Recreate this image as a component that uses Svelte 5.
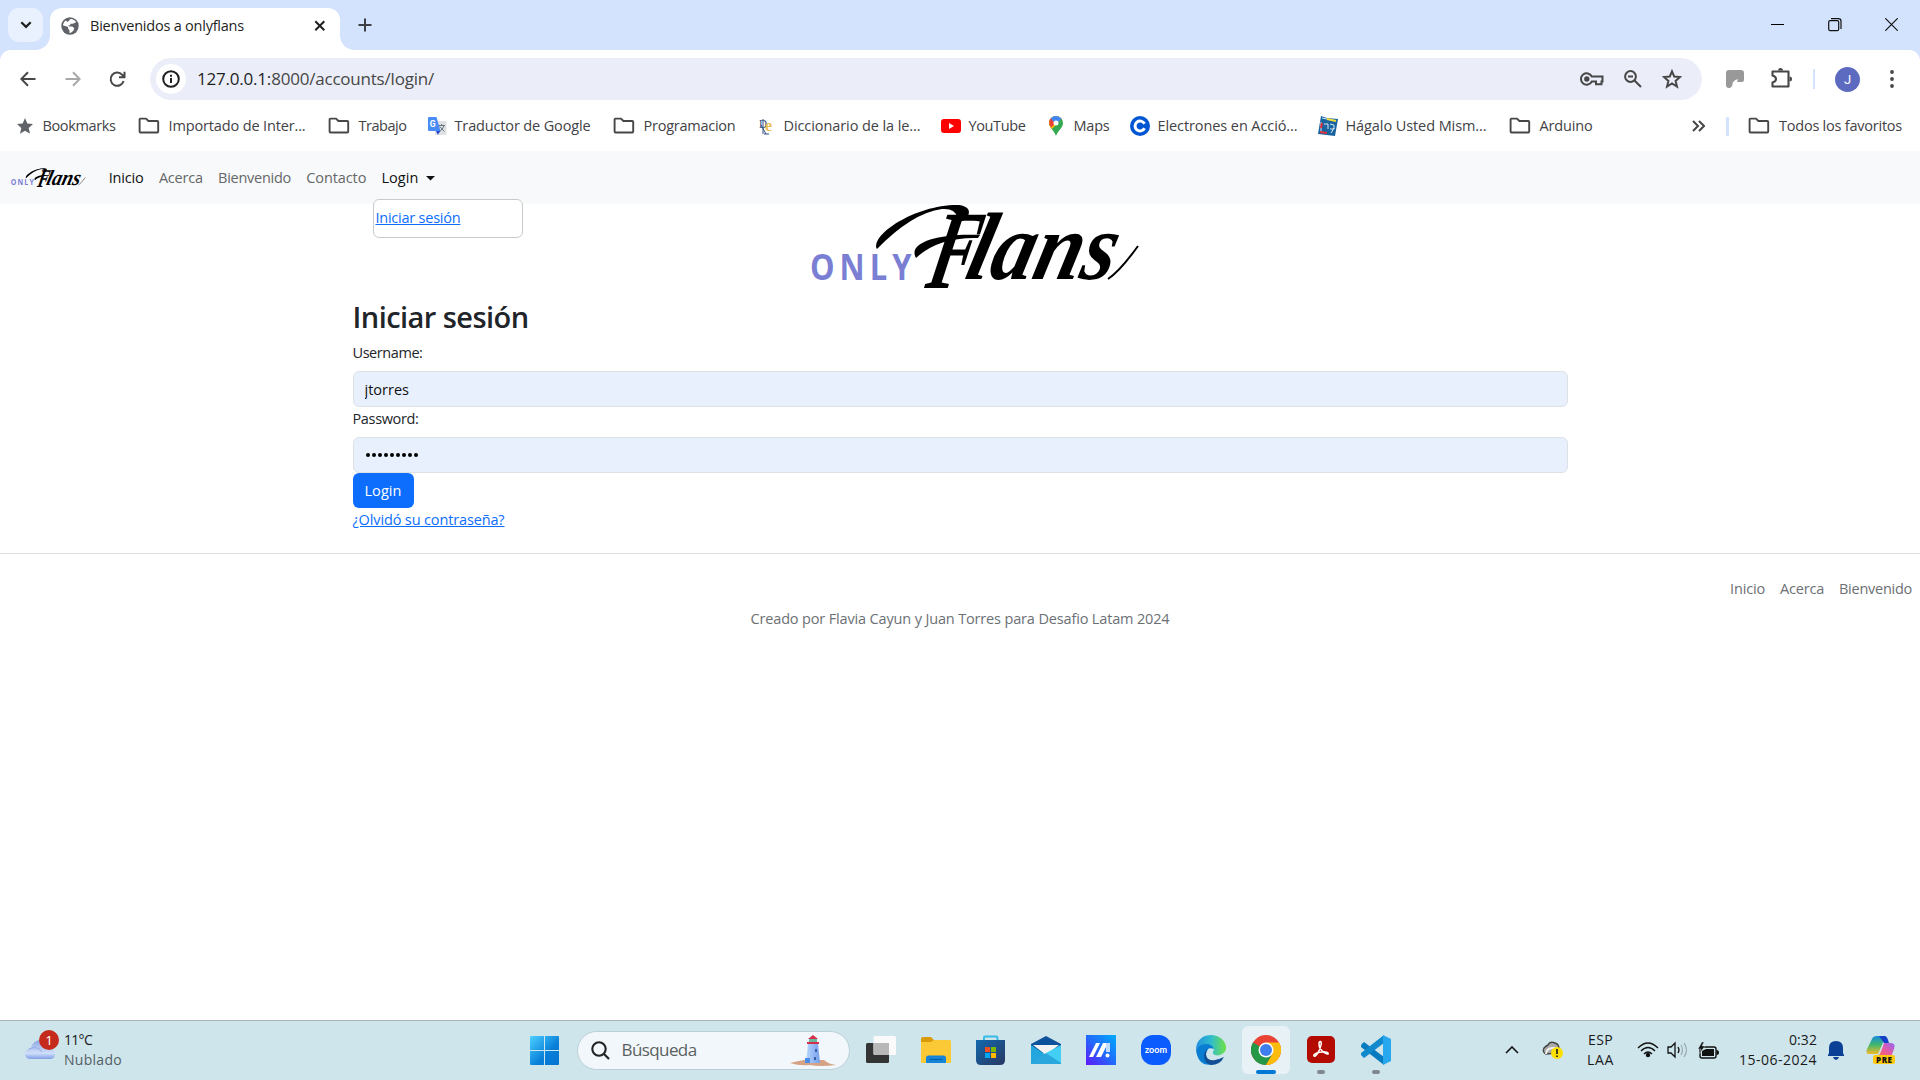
<script>
  const bookmarks = [
    { icon: 'star', label: 'Bookmarks', w: 73 },
    { icon: 'folder', label: 'Importado de Inter...', w: 137 },
    { icon: 'folder', label: 'Trabajo', w: 48 },
    { icon: 'translate', label: 'Traductor de Google', w: 136 },
    { icon: 'folder', label: 'Programacion', w: 92 },
    { icon: 'dle', label: 'Diccionario de la le...', w: 137 },
    { icon: 'youtube', label: 'YouTube', w: 57 },
    { icon: 'maps', label: 'Maps', w: 36 },
    { icon: 'c', label: 'Electrones en Acció...', w: 140 },
    { icon: 'book', label: 'Hágalo Usted Mism...', w: 141 },
    { icon: 'folder', label: 'Arduino', w: 53 }
  ];

  const navLinks = [
    { label: 'Inicio', w: 35, active: true },
    { label: 'Acerca', w: 44 },
    { label: 'Bienvenido', w: 73 },
    { label: 'Contacto', w: 60 }
  ];

  const footerLinks = [
    { label: 'Inicio', w: 35 },
    { label: 'Acerca', w: 44 },
    { label: 'Bienvenido', w: 73 }
  ];

  let username = $state('jtorres');
  const dots = Array.from({ length: 9 });

  // Spreads a label over a fixed advance width through its letter spacing.
  function fit(node, width) {
    node.style.letterSpacing = '0px';
    const natural = node.getBoundingClientRect().width;
    const count = node.textContent.length;
    node.style.letterSpacing = (width - natural) / count + 'px';
    node.style.width = width + 'px';
  }
</script>

{#snippet folder()}
  <svg class="folder" width="22" height="18" viewBox="0 0 22 18" fill="none" stroke="#474747" stroke-width="1.9" stroke-linejoin="round">
    <path d="M1.6 2.4Q1.6 1.6 2.4 1.6H8L10.4 4H19.3Q20.2 4 20.2 4.9V14.6Q20.2 15.5 19.3 15.5H2.5Q1.6 15.5 1.6 14.6Z" />
  </svg>
{/snippet}

{#snippet logo()}
  <svg class="logo" viewBox="0 0 328 88">
    <text transform="translate(-2 76) scale(.86 1)" font-family="Open Sans" font-weight="700" font-size="36" textLength="118" fill="#7b7fd4">ONLY</text>
    <path d="M65 45C58 31 104 0 147 1Q160 3 156 12Q148 22 145 13Q143 4 130 5Q100 9 65 45Z" fill="#000" />
    <path d="M104 54C95 38 128 29 168 31L166 34Q126 33 104 54Z" fill="#000" />
    <g font-family="Liberation Serif" font-weight="700" font-style="italic" fill="#000">
      <text transform="translate(112 84) skewX(-12)" font-size="112" textLength="48" lengthAdjust="spacingAndGlyphs">F</text>
      <text transform="translate(151 75) skewX(-14)" font-size="96" textLength="148" lengthAdjust="spacingAndGlyphs">lans</text>
    </g>
    <path d="M296 75Q308 67 326 42" fill="none" stroke="#000" stroke-width="2" />
  </svg>
{/snippet}

<div class="screen">
  <header class="tabs">
    <div class="tab-search">
      <svg width="12" height="8" viewBox="0 0 12 8" fill="none" stroke="#1f1f1f" stroke-width="2.2"><path d="M1.3 1.2L6 5.9L10.7 1.2" /></svg>
    </div>
    <div class="tab">
      <svg width="18" height="18" viewBox="0 0 19 19"><circle cx="9.5" cy="9.5" r="9.2" fill="#5f6368" /><path d="M11 2C13.500 2.600 15 3.500 16 5.500L12.500 7.200H9.800V8.800H7.700L8.500 10H12L14 12L13 14.500L10.500 16.500L9 16.800V14.300L7.500 12.500V10.500L2 8.800C2.500 6.800 3.500 4.800 5 3.800L6.500 5L8.500 4.200L9 2.700Z" fill="#fff" /></svg>
      <span class="title" use:fit={154}>Bienvenidos a onlyflans</span>
      <svg width="12" height="12" viewBox="0 0 12 12" fill="none" stroke="#1f1f1f" stroke-width="2"><path d="M1.300 1.300L10.300 10.300M10.300 1.300L1.300 10.300" /></svg>
    </div>
    <svg class="plus" width="14" height="14" viewBox="0 0 14 14" fill="none" stroke="#3c3f43" stroke-width="2"><path d="M7 .5V13.500M.5 7H13.500" /></svg>
    <div class="window-buttons">
      <svg width="13" height="13" viewBox="0 0 13 13" stroke="#000"><path d="M0 6.500H13" /></svg>
      <svg width="14" height="14" viewBox="0 0 14 14" fill="none" stroke="#111" stroke-width="1.200"><rect x=".7" y="2.700" width="10" height="10" rx="1.500" /><path d="M3 .7H10.500Q13 .7 13 3.200V11" /></svg>
      <svg width="13" height="13" viewBox="0 0 13 13" stroke="#111" stroke-width="1.200"><path d="M.3 .3L12.700 12.700M12.700 .3L.3 12.700" /></svg>
    </div>
  </header>

  <section class="chrome">
    <div class="toolbar">
      <svg class="back" width="16" height="16" viewBox="0 0 16 16" fill="none" stroke="#474747" stroke-width="2"><path d="M15.500 8H2M8 1.200L1.300 8L8 14.800" /></svg>
      <svg class="forward" width="16" height="16" viewBox="0 0 16 16" fill="none" stroke="#a8a8a8" stroke-width="2"><path d="M.5 8H14M8 1.200L14.700 8L8 14.800" /></svg>
      <svg class="reload" width="17" height="17" viewBox="0 0 17 17" fill="none" stroke="#474747" stroke-width="2"><path d="M14.600 10A6.600 6.600 0 1 1 13.200 3.800L15 5.600M15.500 .8V6.300H10" /></svg>
      <div class="omnibox">
        <div class="info">
          <svg width="18" height="18" viewBox="0 0 18 18" fill="none" stroke="#1f1f1f" stroke-width="2"><circle cx="9" cy="9" r="7.800" /><path d="M9 8V13M9 4.800V6.800" /></svg>
        </div>
        <span class="url" use:fit={237}><b>127.0.0.1:</b>8000/accounts/login/</span>
        <div class="omni-icons">
          <svg width="24" height="16" viewBox="0 0 24 16" fill="none" stroke="#474747" stroke-width="2"><path d="M11.800 5.500A5.700 5.700 0 1 0 11.800 10.500H16V13.200H21.500V10.500H22.500V5.500Z" /><circle cx="6.800" cy="8" r="2.700" fill="#474747" stroke="none" /></svg>
          <svg width="18" height="18" viewBox="0 0 18 18" fill="none" stroke="#474747" stroke-width="2"><circle cx="6.500" cy="6.500" r="5.400" /><path d="M10.500 10.500L17 17M4 6.500H9" /></svg>
          <svg width="20" height="20" viewBox="0 0 20 20" fill="none" stroke="#474747" stroke-width="2"><path d="M10 2.300L12.200 7.500L18 8L13.600 11.900L15 17.600L10 14.500L5 17.600L6.400 11.900L2 8L7.800 7.500Z" /></svg>
        </div>
      </div>
      <svg class="ext" width="18" height="18" viewBox="0 0 18 18"><path d="M3 0H15Q18 0 18 3V10Q18 12 16 12H11L12 9Q8 10 6.500 13Q7 16 4 18H3Q0 18 0 15V3Q0 0 3 0Z" fill="#999" /></svg>
      <svg class="puzzle" width="21" height="20" viewBox="0 0 21 20"><path d="M1.500 3.500H17.500V18.500H1.500V14.500Q5 13.500 5 11T1.500 7.500Z" fill="none" stroke="#474747" stroke-width="2.100" stroke-linejoin="round" /><path d="M7 2.500A2.500 2.500 0 0 1 12 2.500ZM18.500 8.500A2.500 2.500 0 0 1 18.500 13.500Z" fill="#474747" /></svg>
      <i class="divider"></i>
      <span class="avatar">J</span>
      <svg class="kebab" width="4" height="18" viewBox="0 0 4 18" fill="#474747"><circle cx="2" cy="2" r="1.900" /><circle cx="2" cy="9" r="1.900" /><circle cx="2" cy="16" r="1.900" /></svg>
    </div>

    <div class="bookmarks">
      {#each bookmarks as b}
        <div class="bookmark" class:is-folder={b.icon === 'folder'}>
          {#if b.icon === 'folder'}
            {@render folder()}
          {:else}
            <svg width="20" height="20" viewBox="0 0 20 20">
              {#if b.icon === 'star'}
                <path d="M10 2L12.300 7.400L18 8L13.700 11.900L15 17.700L10 14.700L5 17.700L6.300 11.900L2 8L7.700 7.400Z" fill="#5f6368" />
              {:else if b.icon === 'translate'}
                <rect x="8" y="5" width="11.500" height="14" rx="1" fill="#dfe1e4" />
                <path d="M11.500 9.500H18M14.700 8V9.500M12.300 15.500Q16 13.500 17 9.600M12.700 10.500L17.300 15.500" stroke="#65787f" fill="none" />
                <path d="M2 1H9.500L13.500 15H2Q1 15 1 14V2Q1 1 2 1Z" fill="#4a8cf7" /><path d="M9 15H13.500L10.800 18.800Z" fill="#2449c8" />
                <text x="2.800" y="11" font-family="Roboto" font-weight="700" font-size="8.500" fill="#fff">G</text>
              {:else if b.icon === 'dle'}
                <text x="3" y="11.500" font-family="Liberation Serif" font-size="13" textLength="8" lengthAdjust="spacingAndGlyphs" fill="#314d7e">D</text>
                <text x="9" y="14.500" font-family="Liberation Serif" font-weight="700" font-size="16" fill="#edbd50">e</text>
                <path d="M7 3V18M5 9L10 18M8 18H13" stroke="#314d7e" fill="none" />
              {:else if b.icon === 'youtube'}
                <rect y="3" width="20" height="14" rx="3" fill="#f00" /><path d="M8 7V13L13 10Z" fill="#fff" />
              {:else if b.icon === 'maps'}
                <path d="M3 7A7 7 0 0 1 17 7C17 12 12 14 10 20C8 14 3 12 3 7Z" fill="#34a853" /><path d="M3 7C3 9.500 4.500 11.300 6 13L15.500 2.800A7 7 0 0 0 3 7Z" fill="#fbbc04" /><path d="M3.300 5A7 7 0 0 1 5 2.200L10 7L5 11.500Q2.500 8 3.300 5Z" fill="#ea4335" /><path d="M4.700 2.500A7 7 0 0 1 15.500 2.800L10 8.500Z" fill="#4285f4" /><circle cx="10" cy="7" r="2.500" fill="#fff" />
              {:else if b.icon === 'c'}
                <circle cx="10" cy="10" r="10" fill="#0056d2" /><path d="M14.500 12.300A5 5 0 1 1 14.500 7.700" fill="none" stroke="#fff" stroke-width="3" />
              {:else if b.icon === 'book'}
                <path d="M3 0L9 2L20 3L17 20L0 18Z" fill="#1764a0" /><path d="M4 2L9 3M3 6V16M6 8H10V13M12 8L16 9V13H12M13 17L16 12" stroke="#d8e8f2" fill="none" /><path d="M9 3L18 5" stroke="#f2dc38" stroke-width="2" /><path d="M4 7L3 12M2 16L9 17" stroke="#e22f3b" stroke-width="2" />
              {/if}
            </svg>
          {/if}
          <span use:fit={b.w}>{b.label}</span>
        </div>
      {/each}
      <div class="bookmarks-end">
        <svg width="13" height="12" viewBox="0 0 13 12" fill="none" stroke="#474747" stroke-width="2"><path d="M1 1L6 6L1 11M7 1L12 6L7 11" /></svg>
        <i></i>
        {@render folder()}
        <span use:fit={123}>Todos los favoritos</span>
      </div>
    </div>
  </section>

  <nav class="navbar">
    <div class="brand">{@render logo()}</div>
    {#each navLinks as l}
      <a class:active={l.active} href="#top" use:fit={l.w}>{l.label}</a>
    {/each}
    <div class="dropdown">
      <a class="active" href="#top" use:fit={37}>Login</a>
      <svg width="9" height="5" viewBox="0 0 9 5"><path d="M0 0H9L4.500 4.600Z" fill="#111" /></svg>
      <div class="menu"><a href="#top" use:fit={85}>Iniciar sesión</a></div>
    </div>
  </nav>

  <main>
    <div class="hero">{@render logo()}</div>
    <form class="login">
      <h2><span use:fit={176}>Iniciar sesión</span></h2>
      <label for="user"><span use:fit={70}>Username:</span></label>
      <input id="user" bind:value={username} />
      <label for="pass"><span use:fit={66}>Password:</span></label>
      <div class="password" id="pass">
        {#each dots as _}<i></i>{/each}
      </div>
      <button type="button"><span use:fit={37}>Login</span></button>
      <a class="forgot" href="#top" use:fit={152}>¿Olvidó su contraseña?</a>
    </form>
    <footer>
      <div class="footer-links">
        {#each footerLinks as l}<a href="#top" use:fit={l.w}>{l.label}</a>{/each}
      </div>
      <p><span use:fit={419}>Creado por Flavia Cayun y Juan Torres para Desafio Latam 2024</span></p>
    </footer>
  </main>

  <div class="taskbar">
    <div class="weather">
      <svg width="36" height="34" viewBox="0 0 36 34">
        <defs><linearGradient id="cloud" x1="0" y1="0" x2="0" y2="1"><stop offset="0" stop-color="#8ba6e2" /><stop offset=".7" stop-color="#d0def9" /><stop offset="1" stop-color="#7f9fe6" /></linearGradient></defs>
        <path d="M7 30Q1 30 1 25Q1 20 7 19Q9 11 17 11Q24 12 25 19Q31 20 31 25Q31 30 26 30Z" fill="url(#cloud)" /><path d="M5 20Q13 16 18 23" fill="none" stroke="#8faae5" />
        <circle cx="25" cy="11" r="10" fill="#c42b1c" /><text x="25" y="16" text-anchor="middle" font-family="Open Sans" font-size="13.500" fill="#fff">1</text>
      </svg>
      <div><span class="dark" use:fit={28}>11°C</span><span use:fit={58}>Nublado</span></div>
    </div>

    <div class="apps">
      <div class="app start">
        <svg width="29" height="29" viewBox="0 0 29 29"><defs><linearGradient id="win" x1="0" y1="0" x2="1" y2="1"><stop stop-color="#4cd0ff" /><stop offset=".6" stop-color="#087fd9" /><stop offset="1" stop-color="#0474d0" /></linearGradient></defs><path d="M1 0H14V14H0V1Q0 0 1 0ZM15 0H28Q29 0 29 1V14H15ZM0 15H14V29H1Q0 29 0 28ZM15 15H29V28Q29 29 28 29H15Z" fill="url(#win)" /></svg>
      </div>
      <div class="search">
        <svg width="19" height="19" viewBox="0 0 19 19" fill="none" stroke="#222" stroke-width="2.100"><circle cx="8" cy="8" r="6.700" /><path d="M12.500 12.500L18 18" /></svg>
        <span use:fit={75}>Búsqueda</span>
        <svg class="lighthouse" width="46" height="32" viewBox="0 0 46 32"><defs><linearGradient id="tower"><stop stop-color="#b8d8ff" /><stop offset="1" stop-color="#769de9" /></linearGradient></defs><path d="M0 28Q8 26 14 25H34Q38 29 46 30Q30 32 20 30Q9 31 0 28Z" fill="#d5a383" /><path d="M18 9H28L30 28H16Z" fill="url(#tower)" /><rect x="15" y="23" width="5" height="5" fill="#4b8de8" /><rect x="19" y="3" width="8" height="5" fill="#67b89e" /><path d="M18 4L23 0L28 4ZM17 7H29V9H17Z" fill="#d62f4b" /><path d="M25 14H27V17H25ZM24 22H26V25H24Z" fill="#3460a9" /></svg>
      </div>
      <div class="app"><svg width="30" height="30" viewBox="0 0 30 30"><rect y="8" width="23" height="20" rx="1.500" fill="#343434" /><rect x="7.500" y="1" width="22.500" height="19" rx="1.500" fill="#fafafa" /><path d="M7.500 8H23V20H9Q7.500 20 7.500 18.500Z" fill="#b8b8b8" /></svg></div>
      <div class="app"><svg width="30" height="30" viewBox="0 0 30 30"><path d="M0 4Q0 2 2 2H10L13 5H28L29 9H0Z" fill="#d99c08" /><path d="M0 7H10L13 5H28.500Q30 5 30 6.500V27Q30 28 29 28H1Q0 28 0 27Z" fill="#fcc936" /><path d="M5 28V23Q5 20.500 7.500 20.500H22.500Q25 20.500 25 23V28Z" fill="#1484d8" /><path d="M8.500 24.500H21.500" stroke="#085ba4" /></svg></div>
      <div class="app"><svg width="30" height="30" viewBox="0 0 30 30"><defs><linearGradient id="store" x1="0" y1="0" x2="1" y2="1"><stop stop-color="#1269ae" /><stop offset="1" stop-color="#283761" /></linearGradient></defs><path d="M8 6V2.500Q8 1.500 9 1.500H20Q21.500 1.500 21.500 3V6" fill="none" stroke="#35bae9" stroke-width="2" /><path d="M0 5H29V25Q29 30 24 30H5Q0 30 0 25Z" fill="url(#store)" /><path d="M9 12H14V17H9Z" fill="#f25022" /><path d="M15 12H20V17H15Z" fill="#7fba00" /><path d="M9 18H14V23H9Z" fill="#00a4ef" /><path d="M15 18H20V23H15Z" fill="#ffb900" /></svg></div>
      <div class="app"><svg width="30" height="30" viewBox="0 0 30 30"><path d="M0 9L15 1L30 9V18H0Z" fill="#0d529a" /><path d="M2 10H28L15 20Z" fill="#f4f4f4" /><path d="M0 10L15 20L0 29Z" fill="#23a6dd" /><path d="M15 18L30 10V29H28Z" fill="#42cff3" /><path d="M0 29V27L15 18L30 28V29Z" fill="#2aa7dd" /></svg></div>
      <div class="app"><svg width="30" height="30" viewBox="0 0 30 30"><defs><linearGradient id="asus" x1="0" y1="1" x2="1" y2="0"><stop stop-color="#6217fb" /><stop offset=".5" stop-color="#216afb" /><stop offset="1" stop-color="#00adfc" /></linearGradient></defs><rect width="30" height="30" fill="url(#asus)" /><path d="M3 22L10 8H14L7 22ZM10 22L17 8H24V17H20V12L15 22Z" fill="#fff" /><path d="M20 8H24V17H20Z" fill="#c1dcfc" /><circle cx="21.500" cy="20.500" r="2" fill="#fff" /></svg></div>
      <div class="app"><svg width="30" height="30" viewBox="0 0 30 30"><rect width="30" height="30" rx="12" fill="#0b5cff" /><text x="4" y="17.500" font-family="Lato" font-weight="700" font-size="8.500" textLength="22" lengthAdjust="spacingAndGlyphs" fill="#fff">zoom</text></svg></div>
      <div class="app"><svg width="30" height="30" viewBox="0 0 30 30"><defs><linearGradient id="edge"><stop stop-color="#218fdf" /><stop offset=".5" stop-color="#30bdcd" /><stop offset="1" stop-color="#70e144" /></linearGradient></defs><path d="M0 15C0 4 8 0 15 0C25 0 31 8 30 14C29 20 20 22 17.500 19Q16 18 18 15Q17 10 10 10Q3 10 0 15Z" fill="url(#edge)" /><path d="M0 15Q3 9 10 9Q16 9 18 14Q11 11 10 19Q10 25 17 29.500Q2 32 0 15Z" fill="#087dd2" /><path d="M12 14C7 20 12 27 19 25Q24 24 28 22Q24 30 15 30Q8 28 8 21Q8 16 12 14Z" fill="#124f94" /></svg></div>
      <div class="app open"><svg width="30" height="30" viewBox="0 0 30 30"><circle cx="15" cy="15" r="15" fill="#ea4335" /><path d="M15 15L2 7.500A15 15 0 0 0 15 30L21.500 18.800Z" fill="#249846" /><path d="M15 7.500H28A15 15 0 0 1 15 30L21.500 18.800Z" fill="#fbbc0b" /><circle cx="15" cy="15" r="7.500" fill="#fff" /><circle cx="15" cy="15" r="6" fill="#3f7eee" /></svg></div>
      <div class="app running"><svg width="30" height="30" viewBox="0 0 30 30"><rect x="1" y="1" width="28" height="27" rx="5" fill="#b30b00" /><path d="M8 21C6 18 20 15 22 18C24 21 13 17 13 9C13 5 16 6 15 10C14 16 9 23 8 21Z" fill="none" stroke="#fff" stroke-width="1.500" /></svg></div>
      <div class="app running"><svg width="30" height="30" viewBox="0 0 30 30"><path d="M0 11Q0 9 3 7L23 22V30L0 12Z" fill="#087abf" /><path d="M0 18V20L3 23L23 8V0Z" fill="#1088cc" /><path d="M22 0L30 4V26L22 30Z" fill="#27a7ee" /></svg></div>
    </div>

    <div class="tray">
      <svg class="chevron" width="14" height="8" viewBox="0 0 14 8" fill="none" stroke="#111" stroke-width="1.600"><path d="M1 7L7 1L13 7" /></svg>
      <svg class="onedrive" width="22" height="20" viewBox="0 0 22 20"><path d="M4 14Q0 12 2 8Q4 6 6 5Q8 1 13 3Q17 4 17 9L15 13Z" fill="#aaa" stroke="#444" stroke-width="1.400" /><path d="M4 14Q4 9 10 8L16 8" fill="none" stroke="#eee" stroke-width="2" /><circle cx="15" cy="13" r="6" fill="#fce100" /><path d="M15 9V14M15 15.500V17" stroke="#222" stroke-width="1.700" /></svg>
      <div class="lang"><span use:fit={25}>ESP</span><span use:fit={27}>LAA</span></div>
      <svg class="wifi" width="22" height="16" viewBox="0 0 22 16" fill="none" stroke="#111" stroke-width="1.400"><path d="M1 6Q11 -4 21 6M4 9Q11 2 18 9M7 12Q11 8 15 12" /><circle cx="11" cy="13" r="1.500" fill="#111" /></svg>
      <svg class="sound" width="22" height="18" viewBox="0 0 22 18" fill="none" stroke="#111" stroke-width="1.300"><path d="M1 6H4L8 2V16L4 12H1ZM11 6Q13 9 11 12" /><path d="M14 4Q17 9 14 14M17 2Q22 9 17 16" stroke="#9caeb5" /></svg>
      <svg class="battery" width="21" height="17" viewBox="0 0 21 17"><rect x="2" y="5" width="16" height="11" rx="2" fill="none" stroke="#111" stroke-width="1.400" /><path d="M4 9L8 7H16V14H4ZM18.500 8Q21 8 21 10.500T18.500 13Z" fill="#111" /><path d="M4 0L0 7H3L1 12L7 4H4L6 0Z" fill="#111" stroke="#cfe5ec" stroke-width=".4" /></svg>
      <div class="clock"><span use:fit={28}>0:32</span><span use:fit={78}>15-06-2024</span></div>
      <svg class="bell" width="18" height="20" viewBox="0 0 18 20"><path d="M2 8Q2 1 9 1T16 8V13L17 15V16H1V15L2 13ZM6 17H12Q11 20 9 20T6 17Z" fill="#0a4095" /></svg>
      <svg class="copilot" width="31" height="30" viewBox="0 0 31 30"><defs><linearGradient id="cpa" x1="0" y1="1" x2="0" y2="0"><stop stop-color="#f4b928" /><stop offset=".5" stop-color="#43b86c" /><stop offset="1" stop-color="#178bdc" /></linearGradient><linearGradient id="cpb" x1="1" y1="0" x2="0" y2="1"><stop stop-color="#9566f6" /><stop offset=".5" stop-color="#e45ba5" /><stop offset="1" stop-color="#ff6b4d" /></linearGradient></defs><path d="M6 4Q7 1 11 1H20L12 19H4Q-1 19 1 14Z" fill="url(#cpa)" /><path d="M13 1H18Q21 1 22 5L23 8H18Q16 5 13 1Z" fill="#163fc8" /><path d="M18 8H25Q30 8 28 14L25 22H11Q14 21 18 8Z" fill="url(#cpb)" /><rect x="7" y="20" width="22" height="9" rx="2" fill="#ffc90d" /><text x="10" y="27.500" font-family="Open Sans" font-weight="800" font-size="8" textLength="16" fill="#111">PRE</text></svg>
    </div>
  </div>
</div>

<style>
  :global(body) { background: #fff; overflow: hidden; }
  * { box-sizing: border-box; }
  .screen { width: 1920px; height: 1080px; display: flex; flex-direction: column; background: #fff; font: 14.5px/22.5px "Open Sans", "Noto Sans", sans-serif; color: #212529; }
  svg { display: block; flex: none; }
  span, a { display: inline-block; white-space: nowrap; }

  .tabs { height: 60px; flex: none; display: flex; padding: 8px 8px 0; background: #d3e3fd; }
  .tab-search { width: 35px; height: 34px; border-radius: 11px; background: #eaf1fe; display: grid; place-items: center; }
  .tab { position: relative; width: 290px; height: 42px; margin-left: 7px; padding: 0 14px 6px 11px; display: flex; align-items: center; background: #fff; border-radius: 12px 12px 0 0; color: #1f1f1f; }
  .tab::before, .tab::after { content: ""; position: absolute; bottom: 0; width: 14px; height: 14px; }
  .tab::before { right: 100%; background: radial-gradient(circle at 0 0, transparent 13.5px, #fff 14px); }
  .tab::after { left: 100%; background: radial-gradient(circle at 100% 0, transparent 13.5px, #fff 14px); }
  .title { margin: 0 auto 0 11px; font-size: 14.5px; }
  .plus { margin: 10px 0 0 18px; }
  .window-buttons { margin: 10px 14px 0 auto; display: flex; gap: 43.5px; }

  .chrome { height: 101px; margin-top: -10px; flex: none; background: #fff; border-radius: 11px 11px 0 0; color: #3f4246; }
  .toolbar { height: 58px; padding: 8px 24px 8px 20px; display: flex; align-items: center; }
  .forward { margin-left: 29px; }
  .reload { margin-left: 28px; }
  .omnibox { width: 1552px; height: 42px; margin-left: 24px; padding: 0 20px 0 6px; display: flex; align-items: center; border-radius: 21px; background: #ebeef8; }
  .info { width: 30px; height: 30px; border-radius: 50%; background: #fff; display: grid; place-items: center; }
  .url { margin: 1px 0 0 11px; font-size: 17px; color: #474747; }
  .url b { font-weight: 400; color: #1f1f1f; }
  .omni-icons { margin-left: auto; display: flex; align-items: center; gap: 20px; }
  .ext { margin-left: 24px; }
  .puzzle { margin-left: 27px; margin-top: -2px; }
  .divider { width: 2px; height: 20px; margin-left: 21px; background: #d3e3fd; }
  .avatar { width: 25px; height: 25px; margin-left: 20px; border-radius: 50%; background: #5c6bc0; color: #fff; font: 13px/25px Roboto, sans-serif; text-align: center; }
  .kebab { margin-left: 30px; }
  .bookmarks { height: 36px; padding: 0 18px 0 14.5px; display: flex; align-items: center; gap: 20px; }
  .bookmark { display: flex; align-items: center; gap: 8px; }
  .bookmark.is-folder { gap: 9px; padding-left: 2px; }
  .bookmarks-end { margin-left: auto; display: flex; align-items: center; }
  .bookmarks-end i { width: 3px; height: 19px; margin: 0 19px 0 21px; background: #d3e3fd; border-radius: 1px; }
  .bookmarks-end span { margin-left: 9px; }

  .navbar { height: 53px; flex: none; padding: 1px 11px 0; display: flex; align-items: center; gap: 15.2px; background: #f8f9fa; }
  .navbar a { color: #656769; text-decoration: none; }
  .navbar a.active { color: #111; }
  .brand { width: 75px; height: 20px; margin-right: 7.5px; }
  .logo { width: 100%; height: 100%; overflow: visible; }
  .dropdown { position: relative; display: flex; align-items: center; gap: 8px; }
  .menu { position: absolute; left: -8px; top: 32px; width: 150px; height: 39px; padding: 7px 1px; background: #fff; border: 1px solid #c9cacb; border-radius: 6px; }
  .navbar .menu a, .login a { color: #0d6efd; text-decoration: underline; }

  main { flex: 1; display: flex; flex-direction: column; align-items: center; }
  .hero { width: 328px; height: 88px; margin-left: 31px; }
  .login { width: 1215px; display: flex; flex-direction: column; align-items: flex-start; }
  h2 { height: 36px; margin: 7px 0 7px; font-size: 29px; font-weight: 600; line-height: 36px; }
  label { height: 22.5px; margin-bottom: 6.5px; }
  input + label { padding-top: 1px; margin-bottom: 7.5px; }
  input, .password { width: 100%; height: 36px; padding: 0 11px; border: 1px solid #dee2e6; border-radius: 6px; background: #e8f0fe; color: #111; font: inherit; outline: none; }
  .password { display: flex; align-items: center; gap: 2px; padding-left: 12px; }
  .password i { width: 4px; height: 4px; border-radius: 50%; background: #000; }
  button { width: 61px; height: 35px; padding: 1px 12px 0; border: 0; border-radius: 6px; background: #0d6efd; color: #fff; font: inherit; text-align: left; }
  .forgot { margin-top: 1px; }
  footer { width: 100%; margin-top: 21px; padding: 24px 8px 0; border-top: 1px solid #dee2e6; color: #6c7075; }
  .footer-links { display: flex; justify-content: flex-end; gap: 15px; }
  .footer-links a { color: #6c7075; text-decoration: none; }
  p { margin: 8px 0 0; text-align: center; }

  .taskbar { height: 60px; flex: none; padding-bottom: 1px; display: flex; align-items: center; border-top: 1px solid #a8b5bd; background: #cfe5ec; color: #1a1a1a; font-size: 14px; line-height: 20px; }
  .weather { width: 522px; padding-left: 24px; display: flex; gap: 4px; align-items: center; color: #555f64; }
  .weather svg { margin-top: -8px; }
  .weather > div, .lang, .clock { display: flex; flex-direction: column; align-items: flex-start; }
  .weather .dark { color: #1a1a1a; }
  .apps { display: flex; align-items: center; gap: 7px; }
  .app { position: relative; width: 48px; height: 48px; border-radius: 6px; display: grid; place-items: center; }
  .start { width: 45px; }
  .search { width: 273px; height: 39px; margin: 0 0 0 2.5px; padding: 0 13px; display: flex; align-items: center; border: 1px solid #bacfd6; border-radius: 20px; background: #f1f7fa; color: #5b5f61; font-size: 17px; }
  .search span { margin-left: 12px; }
  .lighthouse { margin-left: auto; margin-top: 2px; }
  .open { background: #e7f1f6; }
  .open::after, .running::after { content: ""; position: absolute; bottom: 0; left: 14px; width: 20px; height: 4px; border-radius: 2px; background: #0078d4; }
  .running::after { left: 20px; width: 8px; background: #7f898d; }
  .tray { margin-left: auto; padding-right: 23px; display: flex; align-items: center; }
  .onedrive { margin-left: 23px; }
  .lang { margin-left: 23px; align-items: center; }
  .wifi { margin-left: 23px; }
  .sound { margin-left: 8px; }
  .battery { margin-left: 9px; }
  .clock { margin-left: 20px; align-items: flex-end; }
  .bell { margin-left: 10px; }
  .copilot { margin-left: 21px; }
</style>
